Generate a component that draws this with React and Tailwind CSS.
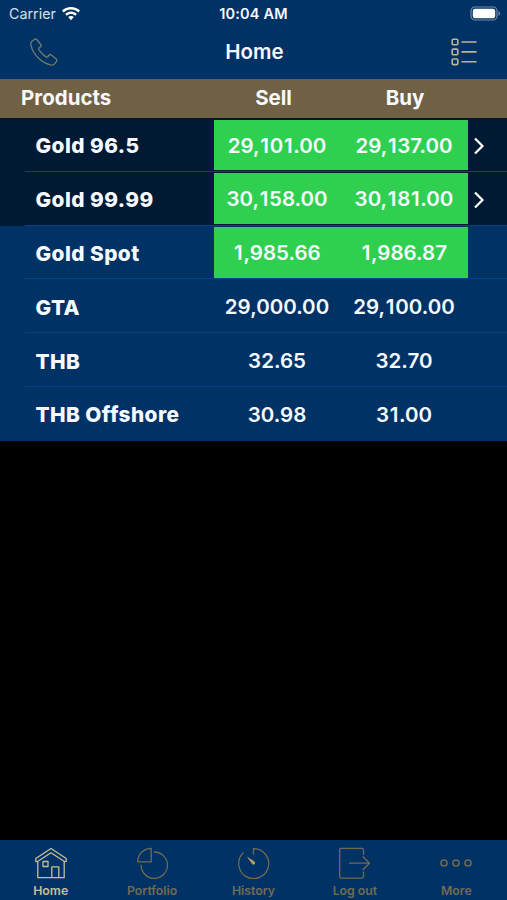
const products = [
  { name: 'Gold 96.5', sell: '29,101.00', buy: '29,137.00', up: true, link: true },
  { name: 'Gold 99.99', sell: '30,158.00', buy: '30,181.00', up: true, link: true },
  { name: 'Gold Spot', sell: '1,985.66', buy: '1,986.87', up: true, link: false },
  { name: 'GTA', sell: '29,000.00', buy: '29,100.00', up: false, link: false },
  { name: 'THB', sell: '32.65', buy: '32.70', up: false, link: false },
  { name: 'THB Offshore', sell: '30.98', buy: '31.00', up: false, link: false },
];

const WifiIcon = () => (
  <svg className="w-[18px] h-[14px]" viewBox="0 0 18 14" fill="#fff">
    <path d="M9 0C5.5 0 2.3 1.3 0 3.6l1.7 1.8C3.6 3.5 6.1 2.4 9 2.4s5.4 1.1 7.3 3L18 3.6C15.7 1.3 12.500 0 9 0Z" />
    <path d="M9 4.500c-2.300 0-4.300.9-5.900 2.400l1.700 1.800C5.900 7.600 7.400 7 9 7s3.100.6 4.200 1.700l1.700-1.800C13.300 5.400 11.300 4.500 9 4.500Z" />
    <path d="M9 9c-1.100 0-2 .4-2.800 1.100L9 13.300l2.800-3.200C11 9.400 10.100 9 9 9Z" />
  </svg>
);

const BatteryIcon = () => (
  <svg className="w-[31px] h-[15px]" viewBox="0 0 31 15">
    <rect x="1" y="1" width="26" height="13" rx="4" fill="none" stroke="#7388a6" strokeWidth="1.2" />
    <rect x="2.800" y="2.800" width="22.400" height="9.400" rx="2.300" fill="#fff" />
    <path d="M28.500 5.200v4.600c1-.4 1.600-1.300 1.600-2.300s-.6-1.900-1.600-2.300Z" fill="#7388a6" />
  </svg>
);

const PhoneIcon = () => (
  <svg className="w-7 h-7" viewBox="0 0 28 28" fill="none" stroke="#6c796c" strokeWidth="1.400" strokeLinejoin="round">
    <path d="M1.700 3.500 4.300 1.500C5.200.8 6.300 1 7 1.800L10.700 6.500C11.300 7.300 11.200 8.200 10.500 8.800L9.200 9.800C8.600 10.400 8.500 11.100 8.900 11.800C10.800 14.500 13.100 16.900 15.900 18.800C16.600 19.200 17.400 19.100 17.900 18.500L18.900 17.200C19.500 16.500 20.500 16.400 21.300 17L26.100 20.800C26.900 21.500 27.100 22.500 26.500 23.300L24.500 25.900C23.500 27.100 21.900 27.300 20.400 26.900C11.300 24.800 3.200 16.700 1 7.400C.7 5.900 .8 4.400 1.700 3.500Z" />
  </svg>
);

const ListIcon = () => (
  <svg className="w-[26px] h-7" viewBox="0 0 26 28" fill="none" stroke="#bdb592" strokeWidth="1.600">
    <rect x="1.200" y="1.200" width="5.600" height="5.600" rx="1" />
    <rect x="1.200" y="11.100" width="5.600" height="5.600" rx="1" />
    <rect x="1.200" y="21" width="5.600" height="5.600" rx="1" />
    <path d="M11 4h14M11 13.900h14M11 23.800h14" strokeLinecap="round" />
  </svg>
);

const HomeIcon = () => (
  <svg className="w-8 h-8" viewBox="0 0 32 32" fill="none" stroke="currentColor" strokeWidth="1.300" strokeLinejoin="round">
    <path d="M16 1.500.8 11.500v3l1.400.2L16 5.700l13.800 9 1.400-.2v-3Z" />
    <path d="M2.800 14.700v16h26.400v-16M16.800 30.500V19.800h7v10.700" />
    <rect x="8" y="14.500" width="5" height="5" />
  </svg>
);

const PortfolioIcon = () => (
  <svg className="w-8 h-8" viewBox="0 0 32 32" fill="none" stroke="currentColor" strokeWidth="1.300" strokeLinejoin="round">
    <path d="M15.200 1.300v13.500H1.700C1.700 7.500 7.700 1.300 15.200 1.300Z" />
    <path d="M18.300 5A13.200 13.200 0 1 1 5.100 18.100" strokeLinecap="round" />
  </svg>
);

const HistoryIcon = () => (
  <svg className="w-8 h-8" viewBox="0 0 32 32" fill="none" stroke="currentColor" strokeWidth="1.300" strokeLinecap="round">
    <path d="M15.500 7V1.600A15 15 0 1 1 5.200 5.900" />
    <path d="M8.700 9.600 16.600 14.600C18 15.900 16.500 18.700 14.300 17.300Z" fill="#b49a60" stroke="none" />
  </svg>
);

const LogoutIcon = () => (
  <svg className="w-8 h-8" viewBox="0 0 32 32" fill="none" stroke="currentColor" strokeWidth="1.300" strokeLinecap="round" strokeLinejoin="round">
    <path d="M24.500 7.500V3c0-1.100-.8-1.700-1.800-1.700H2.200C1.100 1.300.7 2 .7 3v26.500c0 1 .4 1.600 1.500 1.600h20.500c1 0 1.800-.6 1.800-1.600V25" />
    <path d="M10.500 16.200h20M24 9.800l6.500 6.400-6.500 6.500" />
  </svg>
);

const MoreIcon = () => (
  <svg className="w-8 h-8" viewBox="0 0 32 32" fill="none" stroke="currentColor" strokeWidth="1.500">
    <circle cx="4" cy="16" r="3.100" />
    <circle cx="16" cy="16" r="3.100" />
    <circle cx="28" cy="16" r="3.100" />
  </svg>
);

const tabs = [
  { label: 'Home', icon: HomeIcon, active: true },
  { label: 'Portfolio', icon: PortfolioIcon },
  { label: 'History', icon: HistoryIcon },
  { label: 'Log out', icon: LogoutIcon },
  { label: 'More', icon: MoreIcon },
];

// The digit 1 is narrow in Inter, so it gets a little room on both sides
const Price = ({ value }) => (
  <span className="w-1/2 text-center">
    {value.split('').map((char, i) => (
      char === '1' ? <span key={i} className="px-[0.7px]">1</span> : char
    ))}
  </span>
);

const ProductRow = ({ product }) => (
  <div className={`group flex flex-1 pl-[25px] ${product.link ? 'bg-[#001a33]' : 'bg-[#003265]'}`}>
    <div className="flex flex-1 border-b border-[#074283] group-last:border-transparent">
      <div className="w-[188.5px] pl-[10.5px] pt-[3px] flex items-center text-[20.800px] font-extrabold tracking-[0.45px] whitespace-nowrap">
        {product.name}
      </div>
      <div className={`w-[254px] flex items-center mt-[1.500px] mb-[0.5px] pt-[2px] text-[20.500px] font-semibold ${product.up ? 'bg-[#2fd050]' : ''}`}>
        <Price value={product.sell} />
        <Price value={product.buy} />
      </div>
      {product.link && (
        <svg className="w-3 h-[18px] ml-[5px] mt-[3px] self-center" viewBox="0 0 12 18" fill="none" stroke="#fff" strokeWidth="2.200">
          <path d="m2 1.500 7.500 7.500L2 16.500" />
        </svg>
      )}
    </div>
  </div>
);

const App = () => {
  return (
    <div className="w-[507px] h-[900px] flex flex-col overflow-hidden bg-black text-[#f6faff] font-['Inter','Liberation_Sans',sans-serif]">
      {/* Status bar */}
      <div className="h-[27px] flex items-center bg-[#003265] px-[6px] text-[14.300px]">
        <div className="flex-1 flex items-center gap-1.5 pl-[3px] text-[#d5e0ec]">
          Carrier
          <WifiIcon />
        </div>
        <span className="font-semibold text-[14.500px] tracking-[0.2px] -ml-[3px]">10:04 AM</span>
        <div className="flex-1 flex justify-end">
          <BatteryIcon />
        </div>
      </div>

      {/* Navigation bar */}
      <div className="h-[52px] flex items-center justify-between bg-[#003265] px-[30px] pb-[1.500px]">
        <PhoneIcon />
        <h1 className="text-[20.500px] font-semibold">Home</h1>
        <ListIcon />
      </div>

      {/* Table header */}
      <div className="h-[39px] flex items-center bg-[#716144] text-[20.500px] font-bold">
        <span className="w-[210px] pl-[21px]">Products</span>
        <span className="w-[127px] text-center">Sell</span>
        <span className="w-[136px] text-center">Buy</span>
      </div>

      <div className="h-[323px] flex flex-col">
        {products.map((product) => (
          <ProductRow key={product.name} product={product} />
        ))}
      </div>

      {/* Tab bar */}
      <div className="mt-auto h-[60px] flex bg-[#003265]">
        {tabs.map((tab) => {
          const Icon = tab.icon;
          return (
            <div
              key={tab.label}
              className={`flex-1 flex flex-col items-center pt-[7px] ${tab.active ? 'text-[#c5be9b]' : 'text-[#716b53]'}`}
            >
              <Icon />
              <span className="mt-1 text-[12.300px] leading-4 font-semibold">{tab.label}</span>
            </div>
          );
        })}
      </div>
    </div>
  );
};

export default App;
